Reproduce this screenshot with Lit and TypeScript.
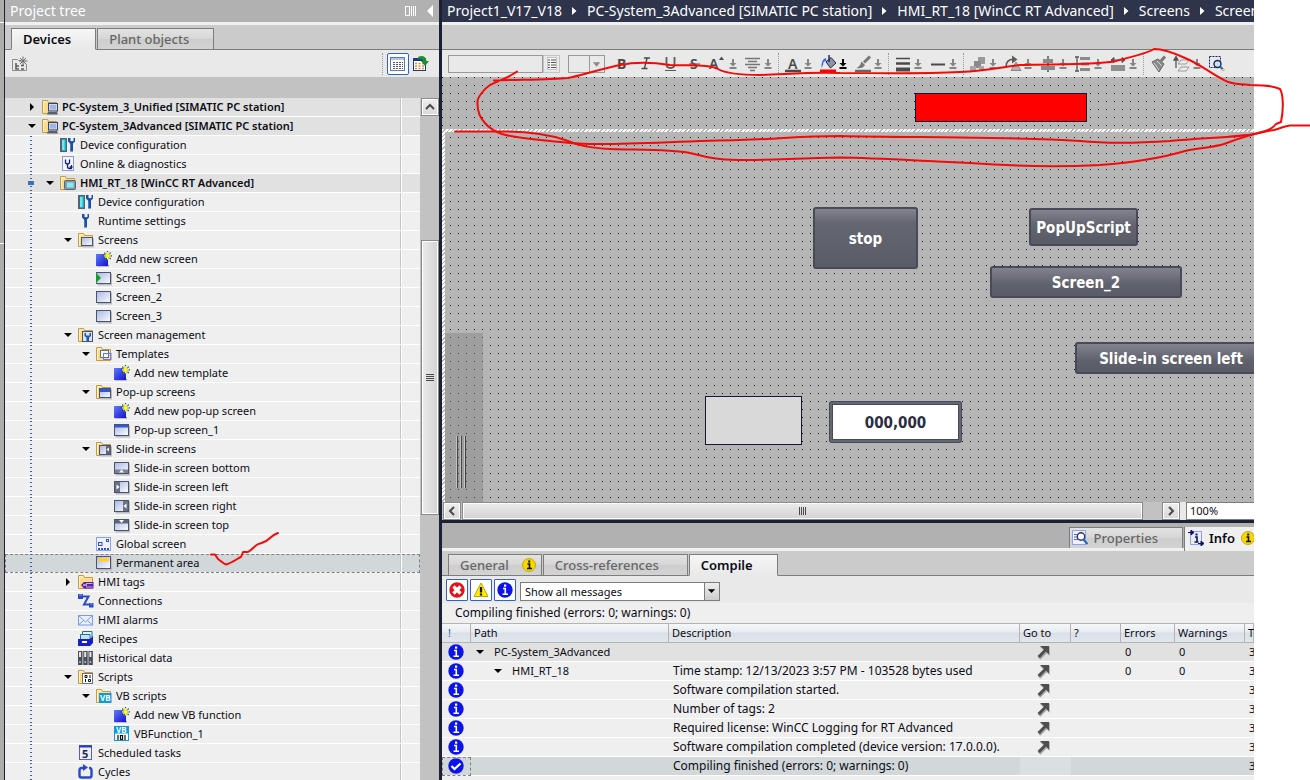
import { LitElement, html, svg, css, nothing, TemplateResult, SVGTemplateResult } from "lit";
import { customElement } from "lit/decorators.js";
import { classMap } from "lit/directives/class-map.js";

/* ---------- icon artwork, all on a 16 x 16 grid ---------- */

const folder = (overlay: SVGTemplateResult) => svg`
  <path d="M0.500 14.500V1.500h5l1 2h8v11z" fill="#fbe3a0" stroke="#c99a3c"/>
  <path d="M1.500 13.500V4.500h12v9z" fill="#fdd98a"/>
  <path d="M1.500 14V2.500h3.500" fill="none" stroke="#fff4cf"/>
  ${overlay}`;

const pane = (x: number, y: number, w: number, h: number, overlay: SVGTemplateResult | typeof nothing = nothing) => svg`
  <rect x=${x + 1.5} y=${y + 1.5} width=${w} height=${h} fill="#b9bcc6"/>
  <rect x=${x + 0.5} y=${y + 0.5} width=${w - 1} height=${h - 1} fill="url(#glass)" stroke="#4c5468"/>
  ${overlay}`;

const spark = svg`
  <rect x="1" y="14" width="12" height="1.500" fill="#8d93b8"/>
  <rect x="0" y="3" width="12" height="12" fill="url(#blue)"/>
  <path d="M11.500 0v9.500M7 4.800h9M8.300 1.600l6.400 6.400M14.700 1.600l-6.400 6.400" stroke="#1c5566" stroke-width="1.200"/>
  <path d="M11.500 1v7.500M8 4.800h7M9.300 2.600l4.400 4.400M13.700 2.600l-4.400 4.400" stroke="#fff23a" stroke-width="1.200"/>`;

const wrench = (x: number) => svg`
  <path d=${`M${x} 1v3.500l2 2v8h3v-8l2-2V1h-1.500v3h-1l-.5.500-.5-.500h-1V1z`} fill="#1f4fa3"/>
  <path d=${`M${x + 2.5} 7v7`} stroke="#3f7fd0"/>`;

const glyphs: Record<string, SVGTemplateResult> = {
  station: folder(svg`
    <rect x="6.500" y="4.500" width="9" height="7.500" fill="#c9d6f5" stroke="#3b4358"/>
    <path d="M8 6h6v4.500H8z" fill="#9fb4ea"/><path d="M5 15.500l1-2.500h9l1 2.500z" fill="#5a5f70"/>`),
  hmi: folder(svg`
    <rect x="4.500" y="5.500" width="11" height="9" rx="1" fill="#8e97a6" stroke="#596377"/>
    <rect x="7" y="7.500" width="6.500" height="5" fill="#7ff0f2"/>`),
  device: svg`
    <rect x="0" y="1" width="7" height="14" fill="#566273"/><rect x="2" y="2.500" width="3.500" height="11" fill="#27dbe6"/>
    <path d="M3 3v10" stroke="#a5fbff"/>${wrench(8)}`,
  diagnostics: svg`
    <rect x="2.500" y="0.500" width="11" height="14" fill="#f4f6ff" stroke="#8c9be6"/>
    <path d="M5.500 3.500v2.500q0 2 2 2t2-2V3.500M7.500 8v2.500q0 2 2 2h1.500V10" fill="none" stroke="#16206a" stroke-width="1.300"/>
    <path d="M9.500 11h3.500M11.500 9v4" stroke="#16206a"/>`,
  wrench: wrench(4),
  screens: folder(pane(3, 5, 12, 9)),
  add: spark,
  startScreen: pane(0, 2, 15, 12, svg`<path d="M0 3l5 5-5 5z" fill="#159a2b"/>`),
  screen: pane(0, 2, 15, 12),
  management: folder(svg`
    <rect x="4.500" y="4.500" width="10" height="10" fill="#d8e4fa" stroke="#4c5468"/>
    <path d="M6.500 6v3l2 1.500V14h2.500v-3.500L13 9V6h-1.500v2.500h-3.500V6z" fill="#1f56b0"/>`),
  templates: folder(svg`
    <rect x="4.500" y="4.500" width="8" height="7" fill="#fff" stroke="#5b6f9a"/>
    <rect x="7.500" y="7.500" width="7.500" height="6" fill="none" stroke="#5a78ff"/>`),
  popups: folder(pane(3, 4, 12, 10, svg`<path d="M4 5h10v3H4z" fill="#2f58dd"/>`)),
  popup: pane(0, 2, 15, 12, svg`<path d="M1 3h13v2.500H1z" fill="#2f58dd"/>`),
  slideins: folder(pane(3, 4, 12, 10, svg`<path d="M10 5h4v8h-4z" fill="#5e6678"/><path d="M13 6.500v4l-2.500-2z" fill="#fff"/>`)),
  slideBottom: pane(0, 2, 15, 12, svg`<path d="M1 9.500h13V13H1z" fill="#7a8294"/><path d="M5 12.500h5L7.500 9.500z" fill="#fff"/>`),
  slideLeft: pane(0, 2, 15, 12, svg`<path d="M1 3h5v10H1z" fill="#6a7286"/><path d="M2.500 5.500v5l3-2.500z" fill="#fff"/>`),
  slideRight: pane(0, 2, 15, 12, svg`<path d="M9 3h5v10H9z" fill="#6a7286"/><path d="M12.500 5.500v5l-3-2.500z" fill="#fff"/>`),
  slideTop: pane(0, 2, 15, 12, svg`<path d="M1 3h13v3.500H1z" fill="#5e6678"/><path d="M5 3h5L7.500 6z" fill="#fff"/>`),
  global: svg`
    <rect x="0.500" y="1.500" width="14" height="13" fill="#eef1ff" stroke="#8ea0ea"/>
    <rect x="2.500" y="6.500" width="3.500" height="3" fill="none" stroke="#3a4dcf"/>
    <rect x="10.500" y="3.500" width="2" height="2" fill="none" stroke="#3a4dcf"/>
    <path d="M2 13h12" stroke="#3a4dcf" stroke-width="2" stroke-dasharray="2 1"/>`,
  permanent: pane(0, 1, 15, 13, svg`<path d="M2 3h11v3.500H2z" fill="#ffcf2e"/>`),
  tags: folder(svg`<path d="M3 11l3-3h9.500v6.500H6z" fill="#5a22a8"/><path d="M8 9.500h6.500M8 13h6.500" stroke="#cbb2ee"/><path d="M5 11h4" stroke="#fff"/>`),
  connections: svg`
    <path d="M3.500 3.500h7L6 11.500h6" fill="none" stroke="#2a49c6" stroke-width="2"/>
    <rect x="0" y="1" width="5" height="5" fill="#2a49c6"/><rect x="11" y="10" width="4.500" height="4.500" fill="#2a49c6"/>
    <path d="M1 2h3M12 11h2.500" stroke="#8fa6ff"/>`,
  alarms: svg`
    <rect x="0.500" y="3.500" width="14" height="9.500" fill="#eaf0ff" stroke="#7f9ae6"/>
    <path d="M1 4l6.500 6L14 4M1 12.500l4.500-4M14 12.500l-4.500-4" fill="none" stroke="#7f9ae6"/>`,
  recipes: svg`
    <path d="M4.500 .500h9.500v7H4.500z" fill="#dff3fb" stroke="#2c6a94"/><path d="M2.500 3.500H12v6H2.500z" fill="#bfe6f5" stroke="#2c6a94"/>
    <path d="M0 8h12l3-3v7l-3 3H0z" fill="#1720c4"/><path d="M4 10h5v2H4z" fill="#fff"/>`,
  history: svg`
    <path d="M0 1h4.500v14H0zM5.200 1h4.500v14H5.200zM10.400 1h4.500v14h-4.500z" fill="#4b4f58"/>
    <path d="M2 2v5M7.200 2v5M12.400 2v5" stroke="#e4e7ee" stroke-width="2"/>
    <path d="M2 11v2M7.200 11v2M12.400 11v2" stroke="#b6bac4" stroke-width="1.500"/>`,
  scripts: folder(svg`
    <rect x="4.500" y="4.500" width="10" height="10" fill="#fff" stroke="#69708a"/>
    <path d="M7 6.500h2v2H7zM12 6v3M7.500 10v3M10.500 10.500h2v2h-2z" fill="none" stroke="#111"/>`),
  vbFolder: folder(svg`<rect x="3" y="5" width="12.500" height="10" fill="#0a9be0"/><text x="4" y="13" font-size="8" font-weight="700" fill="#fff">VB</text>`),
  vb: svg`
    <rect x="0.500" y="0.500" width="14" height="14" fill="#fff" stroke="#0a9be0"/><rect x="0" y="0" width="15" height="7.500" fill="#0a9be0"/>
    <text x="2" y="7" font-size="8" font-weight="700" fill="#fff">VB</text>
    <path d="M4 9v5M6.500 9.500h2v4h-2zM11 9v5" fill="none" stroke="#111" stroke-width="1.200"/>`,
  tasks: svg`
    <rect x="1.500" y="0.500" width="12" height="14" fill="#eef0ff" stroke="#5560b4"/><path d="M1 1.500h13" stroke="#2a3abf" stroke-width="2"/>
    <text x="4" y="12.500" font-size="11" font-weight="700" fill="#20245a">5</text>`,
  cycles: svg`
    <path d="M5 4H3.500Q1.500 4 1.500 6v5.500q0 2 2 2h8q2 0 2-2V6q0-2-2-2H11" fill="none" stroke="#2a49c6" stroke-width="2.400"/>
    <path d="M5 0l5 3.500L5 7z" fill="#2a49c6"/>`,
  newFolder: svg`
    <path d="M.500 14.500V3.500h5l1 1H9M14.500 8v6.500H.500" fill="none" stroke="#8c8c8c"/>
    <path d="M11 .500v9M7 5h8.500M8 2l6 6M14 2l-6 6" stroke="#6c6c6c" stroke-width="1"/>
    <path d="M4 7v6h3M4 10h3M9 9.500h3M9 13h3" fill="none" stroke="#5f5f5f" stroke-width="1.600"/>`,
  listView: svg`
    <rect x="0.500" y="1.500" width="14" height="13" fill="#fff" stroke="#5b78c9"/><path d="M1 3h13" stroke="#b5c3e6" stroke-width="2"/>
    <path d="M3 6.500h10M3 8.500h10M3 10.500h10M3 12.500h10" stroke="#4a5878" stroke-dasharray="2 1"/>`,
  export: svg`
    <rect x="0.500" y="2.500" width="12" height="12" fill="#fff" stroke="#1c3a86"/><path d="M0 3.500h13" stroke="#1c3a86" stroke-width="3"/>
    <path d="M2 7.500h9M2 10h9M2 12.500h9" stroke="#e08a2a" stroke-width="1.500" stroke-dasharray="2 1.500"/>
    <path d="M5 1q7-3 8.500 4H16l-4 5-4-5h2.500Q9.500 2.500 5 3z" fill="#17922e"/>`,
  infoYellow: svg`
    <circle cx="8" cy="8" r="6.500" fill="#f6d800" stroke="#c9a800"/>
    <path d="M6.500 7h2v4.500M6 11.500h5" fill="none" stroke="#111" stroke-width="1.600"/><rect x="7.200" y="3.500" width="2" height="2" fill="#111"/>`,
  infoBlue: svg`
    <circle cx="8" cy="8" r="7.700" fill="#0c14e8"/><path d="M6 6.500h2.300v5M5.500 12.200h5.500" fill="none" stroke="#fff" stroke-width="1.600"/>
    <rect x="7" y="2.500" width="2.200" height="2.200" fill="#fff"/>`,
  ok: svg`<circle cx="8" cy="8" r="7.700" fill="#0c14e8"/><path d="M3.500 8l3 3 6-5.500" fill="none" stroke="#fff" stroke-width="2.200"/>`,
  error: svg`
    <circle cx="8" cy="8" r="7.700" fill="#e3131a"/>
    <path d="M4.500 4.500l7 7M11.500 4.500l-7 7" stroke="#fff" stroke-width="3.200"/>`,
  warning: svg`
    <path d="M8 1l7 13.500H1z" fill="#ffee00" stroke="#b9a600"/><path d="M8 5v5.500" stroke="#111" stroke-width="2.200"/><path d="M8 11.500v2" stroke="#111" stroke-width="2.200"/>`,
  goTo: svg`
    <path d="M4 2h10v9l-3-2.500L4.500 15 2 12.500 8 6z" fill="#a9a9a9" transform="translate(.8 .8)"/>
    <path d="M5 2h9v8.500l-3-3-6 6.500L2.500 12 9 5.500z" fill="#4f4f4f"/>`,
  properties: svg`
    <rect x="0.500" y="0.500" width="13" height="14" fill="#eef1ff" stroke="#93a2e6"/>
    <path d="M2 4.500h4M2 7h3M2 9.500h4" stroke="#5867c9"/>
    <circle cx="9" cy="6.500" r="3.700" fill="#fff" stroke="#2d3560" stroke-width="1.400"/><path d="M11.500 9.500l4 4.500" stroke="#1f6fc0" stroke-width="2.200"/>`,
  info: svg`
    <rect x="2.500" y="1.500" width="11" height="13" fill="#e9edff" stroke="#93a2e6"/>
    <path d="M0 2.500h5M3 0l3 2.500L3 5zM10 13.500h5M13 11l3 2.500-3 2.500z" fill="#10145c" stroke="#10145c"/>
    <path d="M7 7h2v4.500M6.500 12h4" fill="none" stroke="#10145c" stroke-width="1.600"/><rect x="7.500" y="3.500" width="2" height="2" fill="#10145c"/>`,
  styleList: svg`
    <rect x="3.500" y="1.500" width="9" height="12" fill="#f7f7f7" stroke="#c4c4c4"/>
    <path d="M4 4h2M4 6.500h2M4 9h2M4 11.500h2M7 4h5M7 6.500h5M7 9h5M7 11.500h5" stroke="#555"/>`,
};

/* Formatting tools, on a 20 x 20 grid */
const tools: Record<string, SVGTemplateResult> = {
  bold: svg`<text x="5" y="15" font-size="14" font-weight="700" fill="#4a4a4a">B</text>`,
  italic: svg`<path d="M8 4h6M5.500 14.500h6M11 4.500L8.500 14" stroke="#4a4a4a" stroke-width="1.400"/>`,
  underline: svg`<path d="M6.500 3v7q0 4 4 4t4-4V3" fill="none" stroke="#5a5a5a" stroke-width="1.800"/><path d="M5 16.500h11" stroke="#5a5a5a"/>`,
  strike: svg`<text x="6" y="15" font-size="14" font-weight="600" fill="#4a4a4a">S</text><path d="M5 10h11" stroke="#4a4a4a"/>`,
  size: svg`<text x="1" y="15" font-size="14" font-weight="600" fill="#4a4a4a">A</text><path d="M11 6l2.500-3.500L16 6z" fill="#4a4a4a"/>`,
  align: svg`<path d="M2 4.500h15M5 7.500h9M2 10.500h15M5 13.500h9M7 16.500h5" stroke="#767676" stroke-width="1.400"/>`,
  fontColor: svg`<text x="5" y="15" font-size="14" font-weight="600" fill="#4a4a4a">A</text><path d="M2 17h16" stroke="#4a4a4a" stroke-width="2.500"/>`,
  fill: svg`
    <path d="M8 8l5-4.500 5 5.500-5.500 5z" fill="#8d93a2" stroke="#232a52"/><path d="M11 1v7" stroke="#232a52" stroke-width="1.500"/>
    <path d="M8 4q-5 1-4.500 10 2-3 2-6 2-1 3-1z" fill="#3c67f0"/><path d="M2 17h16" stroke="#f00" stroke-width="3"/>`,
  pen: svg`
    <path d="M17 2.500l-6 6" stroke="#777" stroke-width="3"/><path d="M8.500 7.500l3.500 3.500q-2.500 4-8.500 3 3.500-1.500 5-6.500z" fill="#777"/>
    <path d="M2 17h16" stroke="#666" stroke-width="2.500"/>`,
  lines: svg`<path d="M3 4.500h14" stroke="#4a4a4a" stroke-width="1.500"/><path d="M3 9.500h14" stroke="#4a4a4a" stroke-width="2.500"/><path d="M3 15.500h14" stroke="#4a4a4a" stroke-width="4"/>`,
  dash: svg`<path d="M3 10.500h14" stroke="#4a4a4a" stroke-width="2"/>`,
  group: svg`<path d="M10 3h7v7h-7z" fill="#9a9a9a"/><path d="M6 7h7v7H6z" fill="#8a8a8a"/><path d="M2 12h6v6H2zM11 12h5v5h-5z" fill="#a6a6a6"/>`,
  rotate: svg`<path d="M3 13q0-8 8-7.500" fill="none" stroke="#5d5d5d" stroke-width="1.800"/><path d="M9 1.500l5.500 4L9 9.500z" fill="#5d5d5d"/><path d="M8 16.500L13 8l5 8.500z" fill="#b3b3b3" stroke="#888"/>`,
  center: svg`<path d="M10 2v16" stroke="#555" stroke-width="1.500"/><path d="M5 5h10v4H5zM3 12h14v4H3z" fill="#8a8a8a"/>`,
  distribute: svg`<path d="M4 3v14M2 3h4M2 17h4" stroke="#555" stroke-width="1.300"/><path d="M7 3h10v3H7zM8 8.500h8v3H8zM7 14h10v3H7z" fill="#8a8a8a"/>`,
  width: svg`<path d="M3 6h14M6 3.500L3 6l3 2.500zM14 3.500L17 6l-3 2.500z" fill="#555" stroke="#555"/><path d="M3 11h14v6H3z" fill="#8f8f8f"/>`,
  painter: svg`<path d="M13 7l4-4.500" stroke="#777" stroke-width="3"/><path d="M4 8l6-3 6 5-5 8z" fill="#8a8a8a" stroke="#666"/><path d="M6 9l5 7M9 7l5 5" stroke="#d6d6d6"/>`,
  order: svg`<path d="M4 14V6M2 6l2-3.500L6 6z" stroke="#555" fill="#555" stroke-width="1.300"/><path d="M9 6h8l-3 4H6zM9 13h8l-3 4H6z" fill="#ededed" stroke="#9a9a9a"/>`,
  zoomArea: svg`
    <path d="M2.500 2.500h11v11h-11z" fill="none" stroke="#1b2070" stroke-dasharray="2 1"/>
    <circle cx="10.500" cy="10" r="3.500" fill="#c9e3f5" stroke="#222a55" stroke-width="1.400"/><path d="M13 12.500l4 4" stroke="#2a62b0" stroke-width="2.200"/><path d="M15.500 15l1.500 1.500" stroke="#ffd23a" stroke-width="2"/>`,
};

const icon = (name: string) => html`
  <svg class="icon" width="16" height="16" viewBox="0 0 16 16" aria-hidden="true">
    <defs>
      <linearGradient id="glass" x1="0" y1="0" x2="1" y2="1"><stop offset="0" stop-color="#a9b8e4"/><stop offset="1" stop-color="#fdfdff"/></linearGradient>
      <linearGradient id="blue" x1="0" y1="0" x2="1" y2="1"><stop offset="0" stop-color="#5f7bff"/><stop offset="1" stop-color="#1512c8"/></linearGradient>
    </defs>
    ${glyphs[name]}
  </svg>`;

const shared = css`
  * { box-sizing: border-box; }
  :host { font-family: "Noto Sans", "Open Sans", sans-serif; font-size: 11px; line-height: 18px; color: #0c0c14; }
  button, input, select { font: inherit; color: inherit; margin: 0; padding: 0; border: 0; background: none; border-radius: 0; outline: 0; min-width: 0; }
  svg { display: block; flex: none; }
  svg text { font-family: "Noto Sans", sans-serif; }
  .tabs { display: flex; align-items: flex-end; gap: 1px; height: 25px; flex: none; background: #cbcbcb; box-shadow: inset 0 -1px #7d7d7d; padding-left: 6px; }
  .tab { display: flex; align-items: center; height: 22px; padding: 0 24px 0 11px; border: 1px solid #7d7d7d; background: linear-gradient(#e3e3e3, #d6d6d6 50%, #cdcdcd 50%, #d3d3d3); color: #666; font-size: 13px; line-height: 20px; font-weight: 500; white-space: nowrap; }
  .tab.active { border-bottom-color: #e9e9e9; background: linear-gradient(#f6f6f6, #e9e9e9); color: #0c0c14; font-weight: 600; }
  .scroll-button { display: flex; align-items: center; justify-content: center; width: 18px; height: 18px; flex: none; border: 1px solid #8a8a8a; box-shadow: inset 0 0 0 1px #fff; background: linear-gradient(#eee, #d8d8d8); }
  .thumb { display: flex; align-items: center; justify-content: center; border: 1px solid #8a8a8a; box-shadow: inset 0 0 0 1px #fff; }
`;

const chevron = (d: string) => html`
  <svg width="10" height="10" viewBox="0 0 10 10" aria-hidden="true"><path d=${d} fill="none" stroke="#4a4a4a" stroke-width="2"/></svg>`;

/* ---------- project tree ---------- */

interface Node { level: number; icon: string; text: string; state?: "open" | "closed"; strong?: boolean; selected?: boolean; marked?: boolean; }

const nodes: Node[] = [
  { level: 0, icon: "station", text: "PC-System_3_Unified [SIMATIC PC station]", state: "closed", strong: true },
  { level: 0, icon: "station", text: "PC-System_3Advanced [SIMATIC PC station]", state: "open", strong: true },
  { level: 1, icon: "device", text: "Device configuration" },
  { level: 1, icon: "diagnostics", text: "Online & diagnostics" },
  { level: 1, icon: "hmi", text: "HMI_RT_18 [WinCC RT Advanced]", state: "open", strong: true, marked: true },
  { level: 2, icon: "device", text: "Device configuration" },
  { level: 2, icon: "wrench", text: "Runtime settings" },
  { level: 2, icon: "screens", text: "Screens", state: "open" },
  { level: 3, icon: "add", text: "Add new screen" },
  { level: 3, icon: "startScreen", text: "Screen_1" },
  { level: 3, icon: "screen", text: "Screen_2" },
  { level: 3, icon: "screen", text: "Screen_3" },
  { level: 2, icon: "management", text: "Screen management", state: "open" },
  { level: 3, icon: "templates", text: "Templates", state: "open" },
  { level: 4, icon: "add", text: "Add new template" },
  { level: 3, icon: "popups", text: "Pop-up screens", state: "open" },
  { level: 4, icon: "add", text: "Add new pop-up screen" },
  { level: 4, icon: "popup", text: "Pop-up screen_1" },
  { level: 3, icon: "slideins", text: "Slide-in screens", state: "open" },
  { level: 4, icon: "slideBottom", text: "Slide-in screen bottom" },
  { level: 4, icon: "slideLeft", text: "Slide-in screen left" },
  { level: 4, icon: "slideRight", text: "Slide-in screen right" },
  { level: 4, icon: "slideTop", text: "Slide-in screen top" },
  { level: 3, icon: "global", text: "Global screen" },
  { level: 3, icon: "permanent", text: "Permanent area", selected: true },
  { level: 2, icon: "tags", text: "HMI tags", state: "closed" },
  { level: 2, icon: "connections", text: "Connections" },
  { level: 2, icon: "alarms", text: "HMI alarms" },
  { level: 2, icon: "recipes", text: "Recipes" },
  { level: 2, icon: "history", text: "Historical data" },
  { level: 2, icon: "scripts", text: "Scripts", state: "open" },
  { level: 3, icon: "vbFolder", text: "VB scripts", state: "open" },
  { level: 4, icon: "add", text: "Add new VB function" },
  { level: 4, icon: "vb", text: "VBFunction_1" },
  { level: 2, icon: "tasks", text: "Scheduled tasks" },
  { level: 2, icon: "cycles", text: "Cycles" },
];

const twisty = (state?: "open" | "closed") => html`
  <svg width="14" height="10" viewBox="0 0 14 10" aria-hidden="true">
    ${state === "open" ? svg`<path d="M3 3h8L7 7z" fill="#000"/>` : state === "closed" ? svg`<path d="M5 1l4 4-4 4z" fill="#000"/>` : nothing}
  </svg>`;

@customElement("project-tree")
export class ProjectTree extends LitElement {
  static styles = [shared, css`
    :host { display: flex; flex-direction: column; background: #c2c2c2; min-height: 0; }
    header { display: flex; align-items: center; height: 25px; flex: none; padding: 0 4px 0 5px; background: #b1b1b1; border-bottom: 3px solid #f0f0f0; color: #fff; }
    h2 { flex: 1; margin: 0; font-size: 14px; line-height: 22px; font-weight: 400; }
    header svg + svg { margin-left: 8px; }
    .toolbar { display: flex; align-items: center; height: 27px; flex: none; padding: 0 7px; background: #e9e9e9; }
    .toolbar button { display: flex; align-items: center; justify-content: center; width: 22px; height: 22px; }
    .toolbar .new { width: 16px; }
    .toolbar .view { margin: 0 1px 0 4px; border: 1px solid #2f62cc; border-radius: 2px; background: #fff; }
    .toolbar .icon { margin: 0; }
    .separator { height: 22px; margin-left: auto; border-left: 1px dotted #9a9a9a; }
    .body { display: flex; flex: 1; min-height: 0; margin-top: 21px; }
    ul { flex: 1; margin: 0; padding: 0; list-style: none; overflow: hidden; background: #efefef; }
    li { position: relative; display: flex; align-items: center; height: 19px; border-bottom: 1px solid #fff; background: linear-gradient(90deg, #c4c4c4 1px, #fff 1px) right 18px top / 2px 100% no-repeat; white-space: nowrap; }
    li.strong { background-color: #e1e1e1; font-weight: 600; }
    li.selected { background-color: #d2d7da; outline: 1px dashed #7f7f7f; outline-offset: -1px; }
    li.guide::before { content: ""; position: absolute; left: 25px; top: 0; bottom: 0; width: 2px; background: repeating-linear-gradient(#2f62cc 0 1px, transparent 1px 4px); }
    li.marked::after { content: ""; position: absolute; left: 23px; top: 7px; width: 6px; height: 4px; background: #3a6fc4; }
    .icon { margin: 0 4px 0 3px; }
    .track { display: flex; flex-direction: column; width: 19px; padding-left: 1px; }
    .thumb { height: 275px; margin-top: 124px; background: linear-gradient(90deg, #ececec, #d2d2d2); }
  `];

  private row(n: Node, index: number) {
    const classes = { strong: !!n.strong, selected: !!n.selected, guide: index > 1, marked: !!n.marked };
    return html`
      <li role="treeitem" aria-level=${n.level + 1} class=${classMap(classes)} style="padding-left:${20 + n.level * 18}px">
        ${twisty(n.state)}${icon(n.icon)}<span>${n.text}</span>
      </li>`;
  }

  render() {
    return html`
      <header>
        <h2>Project tree</h2>
        <svg width="12" height="12" viewBox="0 0 12 12" aria-hidden="true"><path d="M.500 1.500h4v9h-4zM6.500 1v10M8.500 1v10M10.500 1v10" fill="none" stroke="#fff"/></svg>
        <svg width="10" height="14" viewBox="0 0 10 14" aria-hidden="true"><path d="M8 1v12L2 7z" fill="#fff"/></svg>
      </header>
      <div class="tabs" role="tablist">
        <button class="tab active" role="tab" aria-selected="true">Devices</button>
        <button class="tab" role="tab" aria-selected="false">Plant objects</button>
      </div>
      <div class="toolbar">
        <button class="new" aria-label="New group">${icon("newFolder")}</button>
        <span class="separator"></span>
        <button class="view" aria-label="List view">${icon("listView")}</button>
        <button aria-label="Export">${icon("export")}</button>
      </div>
      <div class="body">
        <ul role="tree">${nodes.map((n, i) => this.row(n, i))}</ul>
        <div class="track">
          <button class="scroll-button" aria-label="Scroll up">${chevron("M1 7l4-4 4 4")}</button>
          <div class="thumb"><svg width="8" height="8" viewBox="0 0 8 8" aria-hidden="true"><path d="M0 .500h8M0 2.500h8M0 4.500h8M0 6.500h8" stroke="#4a4a4a"/></svg></div>
        </div>
      </div>`;
  }
}

/* ---------- screen editor ---------- */

interface Tool { name: string; label: string; split?: boolean; active?: boolean; }

const toolGroups: Tool[][] = [
  [
    { name: "bold", label: "Bold" }, { name: "italic", label: "Italic" }, { name: "underline", label: "Underline" },
    { name: "strike", label: "Strikethrough" }, { name: "size", label: "Text size", split: true }, { name: "align", label: "Text alignment", split: true },
  ],
  [
    { name: "fontColor", label: "Font color", split: true }, { name: "fill", label: "Background color", split: true, active: true },
    { name: "pen", label: "Line color", split: true },
  ],
  [{ name: "lines", label: "Line width", split: true }, { name: "dash", label: "Line style", split: true }],
  [
    { name: "group", label: "Group", split: true }, { name: "rotate", label: "Rotate", split: true }, { name: "center", label: "Align objects", split: true },
    { name: "distribute", label: "Distribute", split: true }, { name: "width", label: "Same width", split: true },
  ],
  [{ name: "painter", label: "Format painter" }, { name: "order", label: "Arrange", split: true }, { name: "zoomArea", label: "Zoom to selection" }],
];

@customElement("screen-editor")
export class ScreenEditor extends LitElement {
  static styles = [shared, css`
    :host { display: flex; flex-direction: column; min-width: 0; min-height: 0; background: #e9e9e9; }
    nav { display: flex; align-items: center; gap: 10px; height: 25px; flex: none; padding-left: 5px; background: #2d344c; border-bottom: 3px solid #f0f0f0; overflow: hidden; white-space: nowrap; font-size: 14px; line-height: 22px; font-weight: 400; }
    nav a { color: #fff; text-decoration: none; }
    .strip { height: 25px; flex: none; background: #cbcbcb; border-bottom: 1px solid #7d7d7d; }
    .toolbar { display: flex; align-items: center; height: 27px; flex: none; padding-left: 6px; }
    .toolbar button { display: flex; align-items: center; justify-content: center; height: 20px; }
    .font { width: 95px; height: 18px; border: 1px solid #999; }
    .toolbar .font-list { width: 17px; height: 18px; border: 1px solid #c4c4c4; }
    .drop { display: grid; width: 37px; height: 18px; margin: 0 7px 0 8px; border: 1px solid #999; }
    .drop > * { grid-area: 1 / 1; }
    .drop select { appearance: none; width: 100%; }
    .drop svg { justify-self: end; pointer-events: none; border-left: 1px solid #999; }
    .group { display: flex; align-items: center; }
    .group + .group { border-left: 1px dotted #999; padding-left: 4px; height: 22px; }
    .tool { width: 20px; margin-right: 4px; }
    .split { width: 30px; margin-right: 5px; }
    .dots { background: conic-gradient(from 270deg at 1px 1px, #111 90deg, transparent 0) 0 0 / 8px 8px; background-color: #b5b5b5; }
    .permanent { position: relative; height: 52px; flex: none; overflow: hidden; }
    .main { flex: 1; min-height: 0; padding: 3px 0 0 3px; background: repeating-linear-gradient(135deg, #fafafa 0 2px, #b5b5b5 2px 3px); }
    .screen { position: relative; height: 100%; overflow: hidden; background-position: 5px 5px; }
    .object { position: absolute; }
    .red { left: 473px; top: 16px; width: 172px; height: 29px; border: 1px solid #14182e; background: #f00; }
    .slide-handle { left: 0; top: 201px; bottom: 0; width: 38px; background: rgba(125, 125, 125, 0.4); }
    .slide-handle svg { position: absolute; left: 11px; top: 103px; }
    .push, .io { font: bold 15px/20px "DejaVu Sans Condensed", "Noto Sans", sans-serif; white-space: nowrap; padding-top: 2px; }
    .push { border: 2px solid #484a59; border-radius: 3px; background: linear-gradient(#83838e, #646672 14px, #5f616c 60%, #595b67); color: #fff; }
    .stop { left: 368px; top: 75px; width: 105px; height: 62px; }
    .popup { left: 584px; top: 76px; width: 109px; height: 38px; }
    .second { left: 545px; top: 134px; width: 192px; height: 32px; }
    .slide { left: 630px; top: 210px; width: 192px; height: 32px; }
    .blank { left: 260px; top: 264px; width: 97px; height: 49px; border: 1px solid #14182e; background: #d9d9d9; }
    .io { left: 384px; top: 269px; width: 133px; height: 42px; border: 3px solid #646672; border-radius: 3px; background: #fff; color: #2a2c42; text-align: center; box-shadow: inset 0 0 0 1px #484a59; outline: 1px solid #484a59; outline-offset: -1px; }
    .bottom { display: flex; align-items: center; height: 18px; flex: none; padding-left: 1px; background: #c2c2c2; }
    .bottom .thumb { flex: 1; height: 18px; margin: 0 19px 0 1px; background: linear-gradient(#ececec, #d2d2d2); }
    .zoom-box { flex: none; width: 74px; padding-left: 6px; background: #e9e9e9; overflow: hidden; }
    .zoom { width: 74px; height: 18px; padding-left: 3px; border: 1px solid #7d7d7d; background: #fff; }
  `];

  private tool(t: Tool) {
    const arrow = svg`<path d="M24 5h2v4h2.500L25 12.500 21.500 9H24zM21.500 13h7v2h-7z" fill=${t.active ? "#000" : "#858585"}/>`;
    const width = t.split ? 30 : 20;
    return html`
      <button class=${t.split ? "split" : "tool"} aria-label=${t.label}>
        <svg width=${width} height="20" viewBox="0 0 ${width} 20" aria-hidden="true">${tools[t.name]}${t.split ? arrow : nothing}</svg>
      </button>`;
  }

  render() {
    const crumbs = ["Project1_V17_V18", "PC-System_3Advanced [SIMATIC PC station]", "HMI_RT_18 [WinCC RT Advanced]", "Screens", "Screen_1"];
    return html`
      <nav>
        ${crumbs.map((c, i) => html`
          ${i ? html`<svg width="5" height="8" viewBox="0 0 5 8" aria-hidden="true"><path d="M0 0l4.500 4L0 8z" fill="#fff"/></svg>` : nothing}
          <a href="#">${c}</a>`)}
      </nav>
      <div class="strip"></div>
      <div class="toolbar">
        <input class="font" aria-label="Font">
        <button class="font-list" aria-label="Choose font">${icon("styleList")}</button>
        <div class="drop">
          <select aria-label="Font size"></select>
          <svg width="15" height="16" viewBox="0 0 15 16" aria-hidden="true"><path d="M3 6h8L7 11z" fill="#8a8a8a"/></svg>
        </div>
        ${toolGroups.map((g) => html`<div class="group">${g.map((t) => this.tool(t))}</div>`)}
      </div>
      <div class="dots permanent"><div class="object red"></div></div>
      <div class="main">
        <div class="screen dots">
          <div class="object slide-handle">
            <svg width="12" height="52" viewBox="0 0 12 52" aria-hidden="true">
              <path d="M.500 0v52M4.500 0v52M8.500 0v52" stroke="#c4c4c4"/><path d="M1.500 0v52M5.500 0v52M9.500 0v52" stroke="#444"/>
            </svg>
          </div>
          <button class="object push stop">stop</button>
          <button class="object push popup">PopUpScript</button>
          <button class="object push second">Screen_2</button>
          <button class="object push slide">Slide-in screen left</button>
          <div class="object blank"></div>
          <input class="object io" aria-label="I/O field" value="000,000">
        </div>
      </div>
      <div class="bottom">
        <button class="scroll-button" aria-label="Scroll left">${chevron("M7 1L3 5l4 4")}</button>
        <div class="thumb"><svg width="8" height="8" viewBox="0 0 8 8" aria-hidden="true"><path d="M.500 0v8M2.500 0v8M4.500 0v8M6.500 0v8" stroke="#4a4a4a"/></svg></div>
        <button class="scroll-button" aria-label="Scroll right">${chevron("M3 1l4 4-4 4")}</button>
        <div class="zoom-box"><input class="zoom" aria-label="Zoom" value="100%"></div>
      </div>`;
  }
}

/* ---------- inspector ---------- */

interface Message { icon: string; path?: string; depth?: number; text?: string; goTo?: boolean; count?: string; }

const messages: Message[] = [
  { icon: "infoBlue", path: "PC-System_3Advanced", depth: 0, goTo: true, count: "0" },
  { icon: "infoBlue", path: "HMI_RT_18", depth: 1, text: "Time stamp: 12/13/2023 3:57 PM - 103528 bytes used", goTo: true, count: "0" },
  { icon: "infoBlue", text: "Software compilation started.", goTo: true },
  { icon: "infoBlue", text: "Number of tags: 2", goTo: true },
  { icon: "infoBlue", text: "Required license: WinCC Logging for RT Advanced", goTo: true },
  { icon: "infoBlue", text: "Software compilation completed (device version: 17.0.0.0).", goTo: true },
  { icon: "ok", text: "Compiling finished (errors: 0; warnings: 0)" },
];

@customElement("inspector-panel")
export class InspectorPanel extends LitElement {
  static styles = [shared, css`
    :host { display: flex; flex-direction: column; background: #efefef; min-width: 0; overflow: hidden; }
    header { display: flex; align-items: flex-end; justify-content: flex-end; height: 28px; flex: none; background: #b1b1b1; box-shadow: inset 0 -3px #f0f0f0; padding-bottom: 3px; }
    header .tab { height: 21px; padding: 0 24px 0 2px; gap: 6px; border-bottom: 0; }
    header .tab.active { height: 24px; margin: 0 0 -3px 1px; padding: 0 0 3px 3px; gap: 5px; width: 70px; border: 0; border-left: 1px solid #7d7d7d; background: #efefef; overflow: hidden; }
    .tabs .first { padding-right: 4px; gap: 12px; }
    .tabs .middle { min-width: 145px; }
    .tabs .active { min-width: 87px; }
    .filters { display: flex; align-items: center; gap: 2px; height: 27px; flex: none; padding-left: 4px; background: #e9e9e9; }
    .filters button { display: flex; align-items: center; justify-content: center; width: 22px; height: 22px; border: 1px solid #2f62cc; border-radius: 1px; background: #fff; }
    .drop { display: grid; width: 200px; height: 19px; margin: 3px 0 0 2px; border: 1px solid #7d7d7d; background: #fff; }
    .drop > * { grid-area: 1 / 1; }
    .drop select { appearance: none; width: 100%; padding-left: 4px; line-height: 17px; }
    .drop svg { justify-self: end; pointer-events: none; border-left: 1px solid #7d7d7d; background: linear-gradient(#eee, #ccc); }
    .status { margin: 0; padding: 1px 0 1px 13px; font-size: 12px; }
    table { width: 100%; table-layout: fixed; border-spacing: 0; }
    th { height: 20px; padding: 0 0 0 3px; border: solid #b4b4b4; border-width: 1px 1px 1px 0; background: linear-gradient(#f5f7f9, #e8ecf0 45%, #d9dfe6 50%, #e2e7ed); text-align: left; font-weight: 400; line-height: 18px; }
    th:first-child { padding-left: 6px; color: #2f62a0; }
    td { height: 19px; padding: 0 0 0 4px; border-bottom: 1px solid #fff; white-space: nowrap; overflow: hidden; }
    tr.group td { background: #e1e1e1; }
    tr.selected td { background: #d2d7da; }
    tr.selected td:first-child { outline: 1px dashed #7f7f7f; outline-offset: -1px; }
    tr.selected td:nth-child(4) { background: #dadfe2; }
    td:first-child { padding-left: 6px; }
    td:nth-child(2) { padding-left: 2px; }
    td:nth-child(3) { font-size: 12px; }
    td:nth-child(4) { padding-left: 15px; }
    .path { display: flex; align-items: center; gap: 7px; }
    .c-flag { width: 29px; } .c-path { width: 198px; } .c-text { width: 351px; } .c-goto { width: 51px; }
    .c-help { width: 50px; } .c-errors { width: 54px; } .c-warnings { width: 70px; } .c-time { width: auto; }
  `];

  private row(m: Message) {
    const classes = { group: m.depth === 0, selected: m.icon === "ok" };
    return html`
      <tr class=${classMap(classes)}>
        <td>${icon(m.icon)}</td>
        <td>${m.path ? html`<div class="path" style="padding-left:${m.depth! * 18}px">${twisty("open")}<span>${m.path}</span></div>` : nothing}</td>
        <td>${m.text}</td>
        <td>${m.goTo ? icon("goTo") : nothing}</td>
        <td></td>
        <td>${m.count}</td>
        <td>${m.count}</td>
        <td>3:57</td>
      </tr>`;
  }

  render() {
    return html`
      <header role="tablist">
        <button class="tab" role="tab" aria-selected="false">${icon("properties")}Properties</button>
        <button class="tab active" role="tab" aria-selected="true">${icon("info")}Info ${icon("infoYellow")}</button>
      </header>
      <div class="tabs" role="tablist">
        <button class="tab first" role="tab" aria-selected="false">General ${icon("infoYellow")}</button>
        <button class="tab middle" role="tab" aria-selected="false">Cross-references</button>
        <button class="tab active" role="tab" aria-selected="true">Compile</button>
      </div>
      <div class="filters">
        <button aria-label="Errors">${icon("error")}</button>
        <button aria-label="Warnings">${icon("warning")}</button>
        <button aria-label="Information">${icon("infoBlue")}</button>
        <div class="drop">
          <select aria-label="Message filter"><option>Show all messages</option></select>
          <svg width="15" height="17" viewBox="0 0 15 17" aria-hidden="true"><path d="M3 6h8L7 10z" fill="#000"/></svg>
        </div>
      </div>
      <p class="status">Compiling finished (errors: 0; warnings: 0)</p>
      <table>
        <colgroup>
          <col class="c-flag"><col class="c-path"><col class="c-text"><col class="c-goto">
          <col class="c-help"><col class="c-errors"><col class="c-warnings"><col class="c-time">
        </colgroup>
        <thead><tr><th>!</th><th>Path</th><th>Description</th><th>Go to</th><th>?</th><th>Errors</th><th>Warnings</th><th>Time</th></tr></thead>
        <tbody>${messages.map((m) => this.row(m))}</tbody>
      </table>`;
  }
}

/* ---------- shell ---------- */

@customElement("app-root")
export class AppRoot extends LitElement {
  static styles = [shared, css`
    :host { position: relative; display: flex; height: 100vh; padding-right: 56px; background: #fff; overflow: hidden; }
    .edge { width: 5px; flex: none; border-right: 1px solid #1b2133; background: linear-gradient(#fff, #fff) 0 22px / 4px 1px no-repeat, linear-gradient(#fff, #fff) 0 243px / 4px 1px no-repeat, #adadad; }
    project-tree { width: 434px; flex: none; }
    .work { display: flex; flex-direction: column; flex: 1; min-width: 0; border-left: 3px solid #1b2133; }
    screen-editor { flex: 1; }
    inspector-panel { height: 260px; flex: none; border-top: 3px solid #1b2133; }
    .ink { position: absolute; left: 0; top: 0; pointer-events: none; fill: none; stroke: #f50a0a; stroke-width: 2; stroke-linejoin: round; stroke-linecap: round; }
  `];

  render(): TemplateResult {
    return html`
      <div class="edge"></div>
      <project-tree></project-tree>
      <div class="work">
        <screen-editor></screen-editor>
        <inspector-panel></inspector-panel>
      </div>
      <svg class="ink" width="1310" height="780" viewBox="0 0 1310 780" aria-hidden="true">
        <path d="M517 71.500C510 77 498 81 490 85C484 89 478 97 477.500 101C477 110 480 118 485 123C490 129 496 132 502 134C512 137 530 139 545 140.500C560 142 572 143.500 590 144C630 145 680 141 740 140C780 139 800 136 840 136C880 137 920 137 960 137.500C1010 138 1050 139 1080 141C1110 144 1140 143 1170 141C1200 138 1240 137 1254 134C1268 131 1272 129 1276 124L1281 122C1284 108 1283 94 1280 89C1274 86 1262 85 1250 85C1238 84 1230 84 1224 80C1210 73 1200 64 1185 58C1172 52 1160 49 1154 49C1146 54 1130 57 1116 61C1100 65 1060 64 1020 65C1000 67 990 71 960 72C920 74 880 73 840 73C810 72 790 74 760 75C735 75 725 73 718 69C710 64 690 66 670 65C650 62 635 62 620 65C600 69 580 76 568 78C550 80 520 79.500 494 80.500"/>
        <path d="M455 131.500H495C530 131 550 135 565 140C580 146 590 148 610 149C640 150 670 149 690 153C700 155 708 158 720 159C750 162 790 158 840 157.500C880 158 920 161 970 163C1010 166 1060 167 1100 165C1140 162 1165 157 1185 151C1200 148 1215 147 1224 144C1240 138 1262 132 1274 130C1282 128 1284 126 1290 125.500H1310"/>
        <path d="M211 554.500H215L218 559C222 562 224 564 226 564.500C232 563 238 558 241 557L243 552H248C253 549 256 544 260 543.500C264 542 266 542 270 538C273 535 275 534 278 533"/>
      </svg>`;
  }
}
